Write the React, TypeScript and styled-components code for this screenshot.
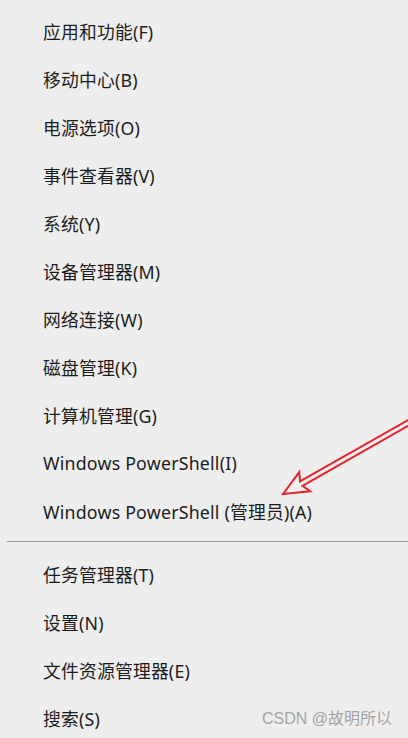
import React from "react";
import styled, { createGlobalStyle } from "styled-components";

const GlobalStyle = createGlobalStyle`
    html, body {
        margin: 0;
        padding: 0;
        background: #eeeeee;
    }
`

const topItems = [
    "应用和功能(F)",
    "移动中心(B)",
    "电源选项(O)",
    "事件查看器(V)",
    "系统(Y)",
    "设备管理器(M)",
    "网络连接(W)",
    "磁盘管理(K)",
    "计算机管理(G)",
    "Windows PowerShell(I)",
    "Windows PowerShell (管理员)(A)",
];

const bottomItems = [
    "任务管理器(T)",
    "设置(N)",
    "文件资源管理器(E)",
    "搜索(S)",
];

export default function App() {
    return (
        <>
            <GlobalStyle />
            <Page>
                <Menu>
                    {topItems.map((item, index) => (
                        <MenuItem key={index}>{item}</MenuItem>
                    ))}
                    <Separator />
                    {bottomItems.map((item, index) => (
                        <MenuItem key={index}>{item}</MenuItem>
                    ))}
                </Menu>
                <Arrow width="408" height="738" viewBox="0 0 408 738">
                    <polygon
                        transform="translate(283 494) rotate(-29.6)"
                        points="0,0 25,-11 21,-2.5 220,-2.5 220,2.5 21,2.5 25,11"
                        fill="none"
                        stroke="#e3242b"
                        strokeWidth="2"
                        strokeLinejoin="miter"
                    />
                </Arrow>
                <Watermark>CSDN @故明所以</Watermark>
            </Page>
        </>
    )
}

const Page = styled.div`
    position: relative;
    width: 408px;
    height: 738px;
    overflow: hidden;
    background: #eeeeee;
`

const Menu = styled.ul`
    list-style: none;
    margin: 0;
    padding: 7px 0 0 0;
`

const MenuItem = styled.li`
    height: 48px;
    display: flex;
    align-items: center;
    padding-left: 43px;
    font-family: "Noto Sans", "Noto Sans CJK SC", sans-serif;
    font-size: 17.8px;
    letter-spacing: 0.2px;
    color: #1c1c1c;
    white-space: nowrap;
`

const Separator = styled.li`
    height: 1px;
    margin: 6px 0 8px 7px;
    background: #9a9a9a;
`

const Arrow = styled.svg`
    position: absolute;
    top: 0;
    left: 0;
    pointer-events: none;
`

const Watermark = styled.div`
    position: absolute;
    right: 16px;
    bottom: 9px;
    font-family: "Liberation Sans", "Noto Sans CJK SC", sans-serif;
    font-size: 16px;
    color: #a3a3a3;
`
